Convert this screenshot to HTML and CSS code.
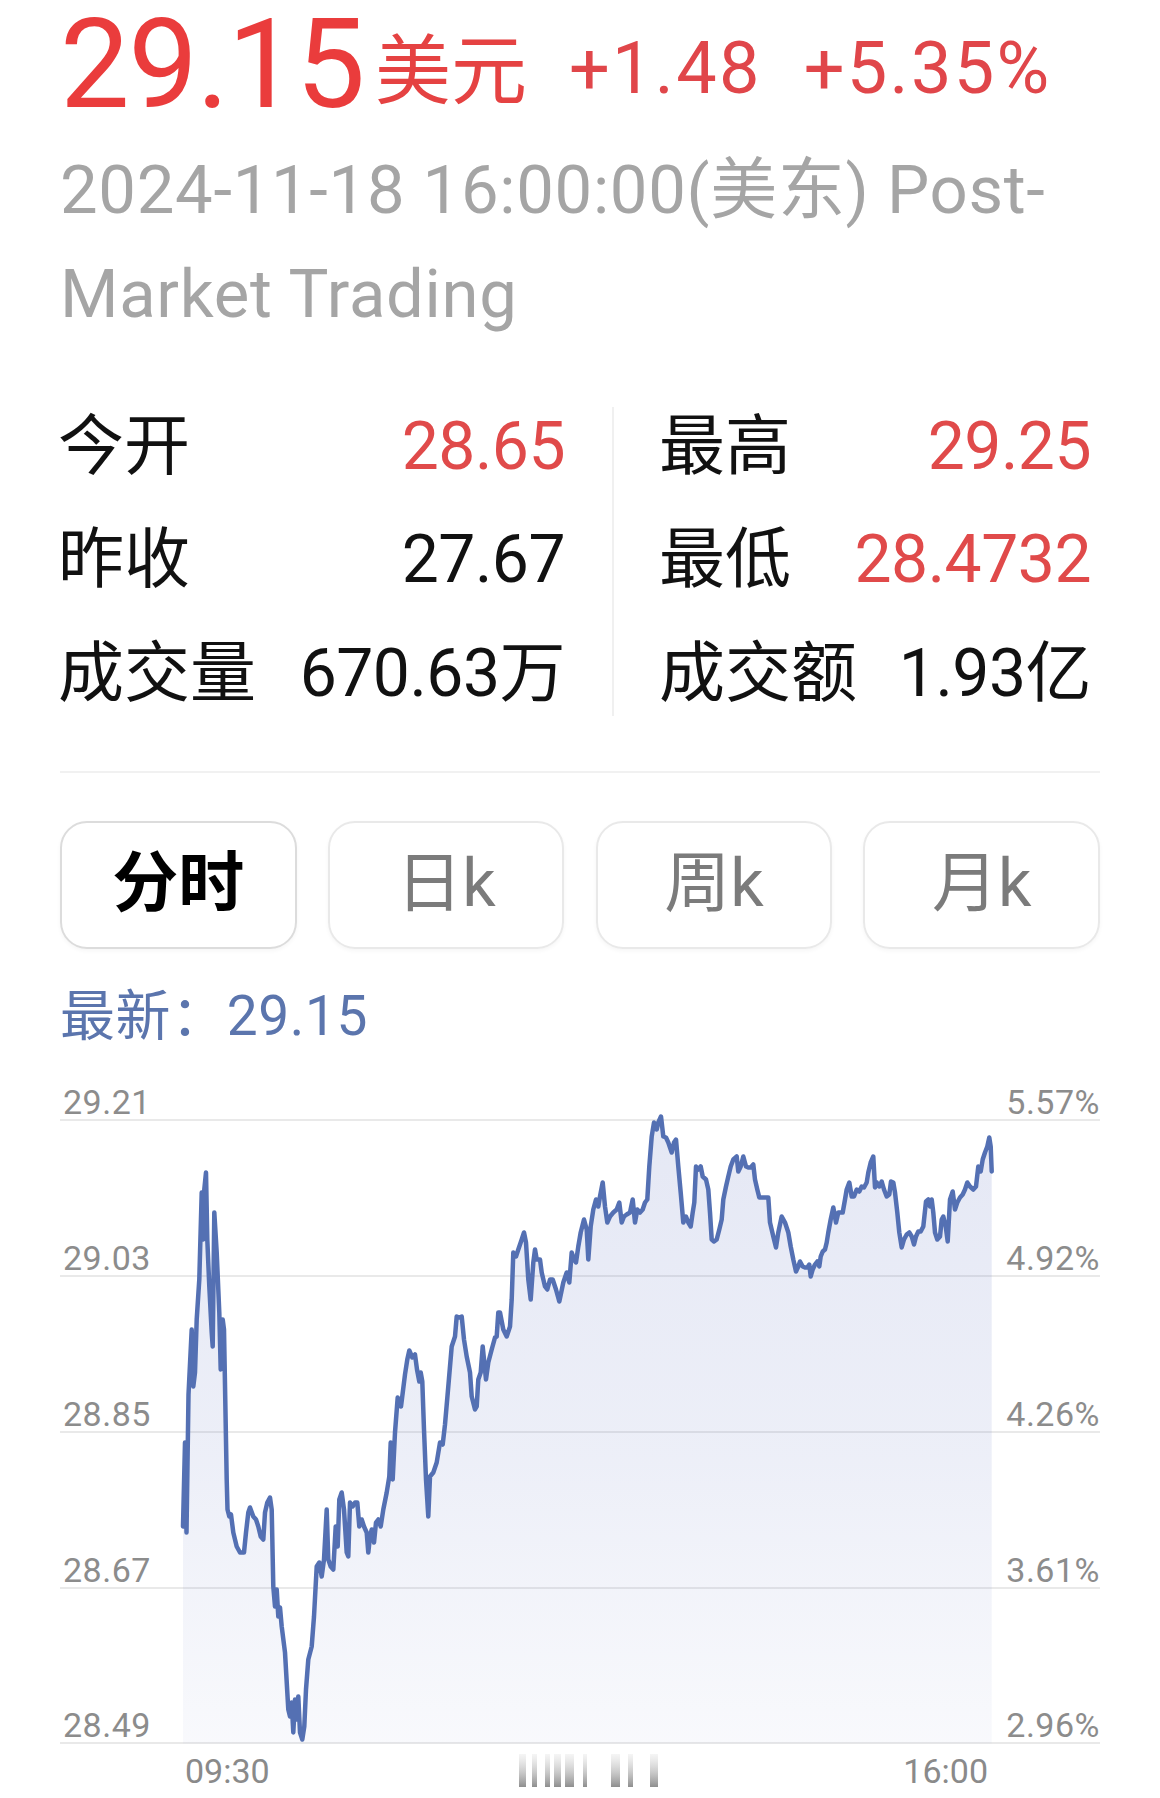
FILE: index.html
```html
<!DOCTYPE html>
<html lang="zh-CN">
<head>
<meta charset="utf-8">
<title>29.15 美元</title>
<link rel="stylesheet" href="styles.css">
</head>
<body>
<div class="page">
  <div class="price-row">
    <span class="price">29.15</span><span class="unit">美元</span><span class="chg chg-amt">+1.48</span><span class="chg chg-pct">+5.35%</span>
  </div>
  <div class="time-stamp">2024-11-18 16:00:00(美东) Post-Market Trading</div>

  <div class="stats">
    <div class="col col-left">
      <div class="stat"><span class="k">今开</span><span class="v up">28.65</span></div>
      <div class="stat"><span class="k">昨收</span><span class="v">27.67</span></div>
      <div class="stat"><span class="k">成交量</span><span class="v">670.63万</span></div>
    </div>
    <div class="vdiv"></div>
    <div class="col col-right">
      <div class="stat"><span class="k">最高</span><span class="v up">29.25</span></div>
      <div class="stat"><span class="k">最低</span><span class="v up">28.4732</span></div>
      <div class="stat"><span class="k">成交额</span><span class="v">1.93亿</span></div>
    </div>
  </div>

  <div class="hr"></div>

  <div class="tabs">
    <div class="tab active">分时</div>
    <div class="tab">日k</div>
    <div class="tab">周k</div>
    <div class="tab">月k</div>
  </div>

  <div class="latest">最新：29.15</div>

  <div class="chart">
    <div class="grid-row first"><span class="yl">29.21</span><span class="yr">5.57%</span></div>
    <div class="grid-row"><span class="yl">29.03</span><span class="yr">4.92%</span></div>
    <div class="grid-row"><span class="yl">28.85</span><span class="yr">4.26%</span></div>
    <div class="grid-row"><span class="yl">28.67</span><span class="yr">3.61%</span></div>
    <div class="grid-row"><span class="yl">28.49</span><span class="yr">2.96%</span></div>
    <svg class="plot" viewBox="60 1046.5 1040 698" width="1040" height="698" xmlns="http://www.w3.org/2000/svg">
      <defs>
        <linearGradient id="area" x1="0" y1="1110" x2="0" y2="1744" gradientUnits="userSpaceOnUse">
          <stop offset="0" stop-color="rgb(90,110,190)" stop-opacity="0.16"/>
          <stop offset="0.55" stop-color="rgb(90,110,190)" stop-opacity="0.11"/>
          <stop offset="1" stop-color="rgb(90,110,190)" stop-opacity="0.04"/>
        </linearGradient>
      </defs>
      <path class="area" fill="url(#area)" d="M183,1744 L183,1527 185,1443 186.5,1533 188.5,1395 191.7,1330 193.3,1387 195,1373 196.7,1320 199.3,1280 201.7,1193 203.3,1240 204.3,1190 206,1173 207.3,1240 209.3,1287 211.7,1333 212.7,1347 214.3,1213 216.7,1253 219.3,1313 220.7,1370 222.7,1320 224,1330 226.7,1480 227.5,1510 229.3,1517 231,1515 233.3,1533 236.7,1547 240,1553 244,1553 246,1533 248.3,1513 250,1508 253.3,1517 256,1520 258.3,1527 260.7,1537 263.3,1540 265,1513 267.3,1503 270,1498 271.7,1510 273.3,1587 275,1607 276.7,1590 278.3,1617 280,1608 281.7,1627 285,1653 288.3,1710 290,1717 291.7,1703 293.3,1733 295,1700 296.7,1720 298.3,1697 300,1733 302.3,1740 304.3,1727 306,1690 308.3,1660 311.7,1647 314,1617 316.7,1567 319.3,1563 321.7,1577 324,1560 326.7,1510 328.3,1560 330.7,1567 333.3,1570 335.7,1527 337.7,1547 339.3,1500 341.7,1493 344,1510 346.7,1553 348.3,1557 350,1503 352.7,1507 355,1503 357.3,1503 359.3,1527 361.7,1520 364,1527 366.7,1533 368.3,1553 370,1537 371.7,1530 374,1543 376,1523 378.3,1520 380.7,1527 383.3,1510 386.7,1493 389.3,1477 390.7,1443 392.7,1480 395,1433 397.7,1398 401,1407 405,1375 407.3,1360 409.3,1351 412.3,1358 415,1355 417,1370 419.3,1382 420.7,1373 422.3,1382 424,1430 426,1480 428.3,1517 430,1477 433.3,1473 436.7,1463 440,1443 442.7,1445 445,1425 448.3,1387 451.7,1347 455,1337 456.7,1317 459.3,1318 461.7,1317 464,1340 466.7,1357 470,1373 471.7,1397 475,1410 476.7,1407 478.3,1380 480.7,1373 482.7,1347 484.3,1363 486,1380 488.3,1363 491.7,1350 495,1338 496.7,1337 498.3,1313 500,1313 503.3,1330 506.7,1337 510,1327 511.7,1300 513.3,1253 516,1257 518.3,1250 521.7,1240 524,1233 526,1243 528.3,1280 530.7,1300 533.3,1263 535,1250 536.7,1260 540,1260 541.7,1273 545,1287 547.3,1290 550,1280 552.7,1280 556,1290 559.3,1302 563.3,1283 566.7,1273 569.3,1283 571.7,1253 574,1260 576,1263 578.3,1247 580.7,1233 584,1220 586.7,1230 588.3,1260 590.7,1227 593.3,1210 596,1200 598.3,1207 600,1197 602.7,1183 605,1207 607.3,1223 610,1217 613.3,1213 616.7,1210 619.3,1203 621.7,1223 624,1217 626.7,1215 630,1213 632.7,1200 635,1223 637.3,1210 640,1213 642.7,1210 645,1203 647.3,1200 649.3,1167 651.7,1137 654,1123 656.7,1130 658.3,1123 661,1117 663.3,1137 666,1138 668.3,1143 671.7,1153 674,1143 676,1140 678.3,1167 680.7,1193 683.3,1223 686,1217 688.3,1223 690.7,1227 692.7,1213 694.3,1203 696,1167 698.3,1170 700.7,1167 702.7,1177 706,1180 708.3,1190 710,1213 711.7,1240 714,1242 716.7,1240 719.3,1230 721.7,1220 723.3,1200 726,1187 728.3,1177 730.7,1167 733.3,1160 736.7,1157 738.3,1172 740.7,1167 743.3,1157 746,1167 748.3,1168 750.7,1168 753.3,1165 755,1180 757.3,1190 759.3,1198 763.3,1198 768.3,1198 770,1223 773.3,1237 776,1248 778.3,1233 781.7,1217 785,1223 788.3,1233 790.7,1247 793.3,1260 796,1272 798.3,1267 800,1262 802.7,1267 805,1268 807.3,1268 809.3,1265 810.7,1277 812.7,1270 815,1265 817.3,1262 819.3,1267 820.7,1257 822.7,1252 825,1250 826.7,1243 828.3,1233 830.7,1220 833.3,1208 836,1223 838.3,1213 842.7,1213 845,1200 846.7,1190 849.3,1183 851.7,1197 854,1197 856.7,1190 859.3,1192 861.7,1187 864,1188 866.7,1183 868.3,1173 870.7,1163 873.3,1157 875,1188 876.7,1183 879.3,1187 881.7,1182 884,1190 886.7,1197 889.3,1195 891,1182 893.3,1183 895,1193 897.3,1213 899.3,1233 901.7,1248 904,1240 906.7,1235 909.3,1233 911.7,1237 914,1245 916,1237 918.3,1232 920.7,1232 923.3,1227 926,1202 928.3,1200 930,1207 931.7,1200 933.3,1213 935,1233 937.3,1240 940,1237 941.7,1220 943.3,1217 945.7,1227 947.7,1242 950,1200 952.7,1192 955,1210 957.3,1203 960,1198 962.7,1195 965,1190 967.3,1183 970,1187 973.3,1190 976,1187 978.3,1167 980.7,1172 982.7,1160 985,1153 987.3,1147 989.3,1138 990.7,1147 991.7,1172 L991.7,1744 Z"/>
      <polyline class="line" fill="none" stroke="#5470b3" stroke-width="4.5" stroke-linejoin="round" stroke-linecap="round" points="183,1527 185,1443 186.5,1533 188.5,1395 191.7,1330 193.3,1387 195,1373 196.7,1320 199.3,1280 201.7,1193 203.3,1240 204.3,1190 206,1173 207.3,1240 209.3,1287 211.7,1333 212.7,1347 214.3,1213 216.7,1253 219.3,1313 220.7,1370 222.7,1320 224,1330 226.7,1480 227.5,1510 229.3,1517 231,1515 233.3,1533 236.7,1547 240,1553 244,1553 246,1533 248.3,1513 250,1508 253.3,1517 256,1520 258.3,1527 260.7,1537 263.3,1540 265,1513 267.3,1503 270,1498 271.7,1510 273.3,1587 275,1607 276.7,1590 278.3,1617 280,1608 281.7,1627 285,1653 288.3,1710 290,1717 291.7,1703 293.3,1733 295,1700 296.7,1720 298.3,1697 300,1733 302.3,1740 304.3,1727 306,1690 308.3,1660 311.7,1647 314,1617 316.7,1567 319.3,1563 321.7,1577 324,1560 326.7,1510 328.3,1560 330.7,1567 333.3,1570 335.7,1527 337.7,1547 339.3,1500 341.7,1493 344,1510 346.7,1553 348.3,1557 350,1503 352.7,1507 355,1503 357.3,1503 359.3,1527 361.7,1520 364,1527 366.7,1533 368.3,1553 370,1537 371.7,1530 374,1543 376,1523 378.3,1520 380.7,1527 383.3,1510 386.7,1493 389.3,1477 390.7,1443 392.7,1480 395,1433 397.7,1398 401,1407 405,1375 407.3,1360 409.3,1351 412.3,1358 415,1355 417,1370 419.3,1382 420.7,1373 422.3,1382 424,1430 426,1480 428.3,1517 430,1477 433.3,1473 436.7,1463 440,1443 442.7,1445 445,1425 448.3,1387 451.7,1347 455,1337 456.7,1317 459.3,1318 461.7,1317 464,1340 466.7,1357 470,1373 471.7,1397 475,1410 476.7,1407 478.3,1380 480.7,1373 482.7,1347 484.3,1363 486,1380 488.3,1363 491.7,1350 495,1338 496.7,1337 498.3,1313 500,1313 503.3,1330 506.7,1337 510,1327 511.7,1300 513.3,1253 516,1257 518.3,1250 521.7,1240 524,1233 526,1243 528.3,1280 530.7,1300 533.3,1263 535,1250 536.7,1260 540,1260 541.7,1273 545,1287 547.3,1290 550,1280 552.7,1280 556,1290 559.3,1302 563.3,1283 566.7,1273 569.3,1283 571.7,1253 574,1260 576,1263 578.3,1247 580.7,1233 584,1220 586.7,1230 588.3,1260 590.7,1227 593.3,1210 596,1200 598.3,1207 600,1197 602.7,1183 605,1207 607.3,1223 610,1217 613.3,1213 616.7,1210 619.3,1203 621.7,1223 624,1217 626.7,1215 630,1213 632.7,1200 635,1223 637.3,1210 640,1213 642.7,1210 645,1203 647.3,1200 649.3,1167 651.7,1137 654,1123 656.7,1130 658.3,1123 661,1117 663.3,1137 666,1138 668.3,1143 671.7,1153 674,1143 676,1140 678.3,1167 680.7,1193 683.3,1223 686,1217 688.3,1223 690.7,1227 692.7,1213 694.3,1203 696,1167 698.3,1170 700.7,1167 702.7,1177 706,1180 708.3,1190 710,1213 711.7,1240 714,1242 716.7,1240 719.3,1230 721.7,1220 723.3,1200 726,1187 728.3,1177 730.7,1167 733.3,1160 736.7,1157 738.3,1172 740.7,1167 743.3,1157 746,1167 748.3,1168 750.7,1168 753.3,1165 755,1180 757.3,1190 759.3,1198 763.3,1198 768.3,1198 770,1223 773.3,1237 776,1248 778.3,1233 781.7,1217 785,1223 788.3,1233 790.7,1247 793.3,1260 796,1272 798.3,1267 800,1262 802.7,1267 805,1268 807.3,1268 809.3,1265 810.7,1277 812.7,1270 815,1265 817.3,1262 819.3,1267 820.7,1257 822.7,1252 825,1250 826.7,1243 828.3,1233 830.7,1220 833.3,1208 836,1223 838.3,1213 842.7,1213 845,1200 846.7,1190 849.3,1183 851.7,1197 854,1197 856.7,1190 859.3,1192 861.7,1187 864,1188 866.7,1183 868.3,1173 870.7,1163 873.3,1157 875,1188 876.7,1183 879.3,1187 881.7,1182 884,1190 886.7,1197 889.3,1195 891,1182 893.3,1183 895,1193 897.3,1213 899.3,1233 901.7,1248 904,1240 906.7,1235 909.3,1233 911.7,1237 914,1245 916,1237 918.3,1232 920.7,1232 923.3,1227 926,1202 928.3,1200 930,1207 931.7,1200 933.3,1213 935,1233 937.3,1240 940,1237 941.7,1220 943.3,1217 945.7,1227 947.7,1242 950,1200 952.7,1192 955,1210 957.3,1203 960,1198 962.7,1195 965,1190 967.3,1183 970,1187 973.3,1190 976,1187 978.3,1167 980.7,1172 982.7,1160 985,1153 987.3,1147 989.3,1138 990.7,1147 991.7,1172"/>
    </svg>
  </div>

  <div class="axis-x">
    <span class="t0">09:30</span>
    <svg class="wm" width="143" height="36" viewBox="0 0 143 36" xmlns="http://www.w3.org/2000/svg">
      <defs>
        <linearGradient id="wmg" x1="0" y1="0" x2="0" y2="1">
          <stop offset="0" stop-color="#e6e6e6" stop-opacity="0.4"/>
          <stop offset="1" stop-color="#8e8e8e"/>
        </linearGradient>
      </defs>
      <g fill="url(#wmg)">
        <rect x="0" y="2" width="7" height="33"/>
        <rect x="13" y="2" width="5" height="33"/>
        <rect x="26" y="2" width="5" height="33"/>
        <rect x="35" y="2" width="7" height="33"/>
        <rect x="46" y="2" width="9" height="33"/>
        <rect x="64" y="2" width="4" height="33"/>
        <rect x="92" y="2" width="9" height="33"/>
        <rect x="109" y="2" width="5" height="33"/>
        <rect x="131" y="2" width="8" height="33"/>
      </g>
    </svg>
    <span class="t1">16:00</span>
  </div>
</div>
</body>
</html>
```

FILE: styles.css
```css
html, body {
  margin: 0;
  padding: 0;
  background: #ffffff;
  overflow: hidden;
}

body {
  font-family: Roboto, "Noto Sans CJK SC", sans-serif;
  color: #111111;
}

.page {
  width: 1040px;
  padding: 3px 60px 0;
}

/* ---------- price header ---------- */
.price-row {
  display: flex;
  align-items: flex-end;
  height: 124px;
  white-space: nowrap;
}

.price {
  font-size: 124px;
  line-height: 1;
  letter-spacing: -1.5px;
  color: #ea3c3c;
}

.unit {
  font-size: 76px;
  line-height: 1;
  margin-left: 11px;
  margin-bottom: 17px;
  color: #e54242;
}

.chg {
  font-size: 72px;
  line-height: 1;
  letter-spacing: 2.3px;
  margin-bottom: 22px;
  color: #e0464a;
}

.chg-amt { margin-left: 42px; }
.chg-pct { margin-left: 42px; }

.time-stamp {
  margin-top: 11.4px;
  font-size: 67px;
  line-height: 104px;
  letter-spacing: 0.7px;
  color: #a5a5a5;
}

/* ---------- stats ---------- */
.stats {
  display: flex;
  margin-top: 44.6px;
}

.col {
  display: flex;
  flex-direction: column;
}

.col-left { width: 505px; }
.col-right { width: 430px; }

.vdiv {
  width: 2px;
  margin: 16px 47px;
  background: #f0f0f0;
}

.stat {
  display: flex;
  justify-content: space-between;
  align-items: baseline;
  height: 113.7px;
  box-sizing: border-box;
  padding-top: 22.7px;
  font-size: 66px;
  line-height: 1;
  white-space: nowrap;
}

.stat .k { color: #111111; margin-left: -2px; }
.stat .v { color: #111111; letter-spacing: -0.5px; }
.stat .v.up { color: #e04a4a; }

.hr {
  height: 2px;
  margin-top: 39px;
  background: #f1f1f1;
}

/* ---------- tabs ---------- */
.tabs {
  display: grid;
  grid-template-columns: repeat(4, 1fr);
  column-gap: 31.3px;
  margin-top: 47.6px;
}

.tab {
  height: 128.8px;
  box-sizing: border-box;
  border: 2px solid #e9e9e9;
  border-radius: 27px;
  box-shadow: 0 2px 4px rgba(0, 0, 0, 0.04);
  display: flex;
  align-items: center;
  justify-content: center;
  padding-bottom: 3px;
  font-size: 66px;
  line-height: 1;
  color: #7b7b7b;
}

.tab.active {
  border-color: #dcdcdc;
  color: #000000;
  font-weight: 700;
}

/* ---------- latest ---------- */
.latest {
  margin-top: 37px;
  font-size: 55px;
  line-height: 60px;
  letter-spacing: 0.6px;
  color: #5b75ad;
}

/* ---------- chart ---------- */
.chart {
  position: relative;
}

.grid-row {
  display: flex;
  justify-content: space-between;
  align-items: flex-end;
  height: 155.75px;
  box-sizing: border-box;
  border-bottom: 2px solid #e9e9e9;
  font-size: 34px;
  line-height: 1;
  letter-spacing: 0.5px;
  color: #8c8c8c;
}

.grid-row.first { height: 75px; }

.grid-row .yl { padding-left: 3px; }

.plot {
  position: absolute;
  left: 0;
  top: 0;
  width: 1040px;
  height: 698px;
  overflow: visible;
}

/* ---------- time axis ---------- */
.axis-x {
  display: flex;
  align-items: flex-start;
  margin-top: 10px;
  font-size: 34px;
  line-height: 1;
  color: #8a8a8a;
}

.axis-x .t0 { margin-left: 125px; }

.axis-x .wm {
  display: block;
  margin-left: 249px;
  margin-top: -2.5px;
}

.axis-x .t1 {
  margin-left: auto;
  margin-right: 112px;
}
```
